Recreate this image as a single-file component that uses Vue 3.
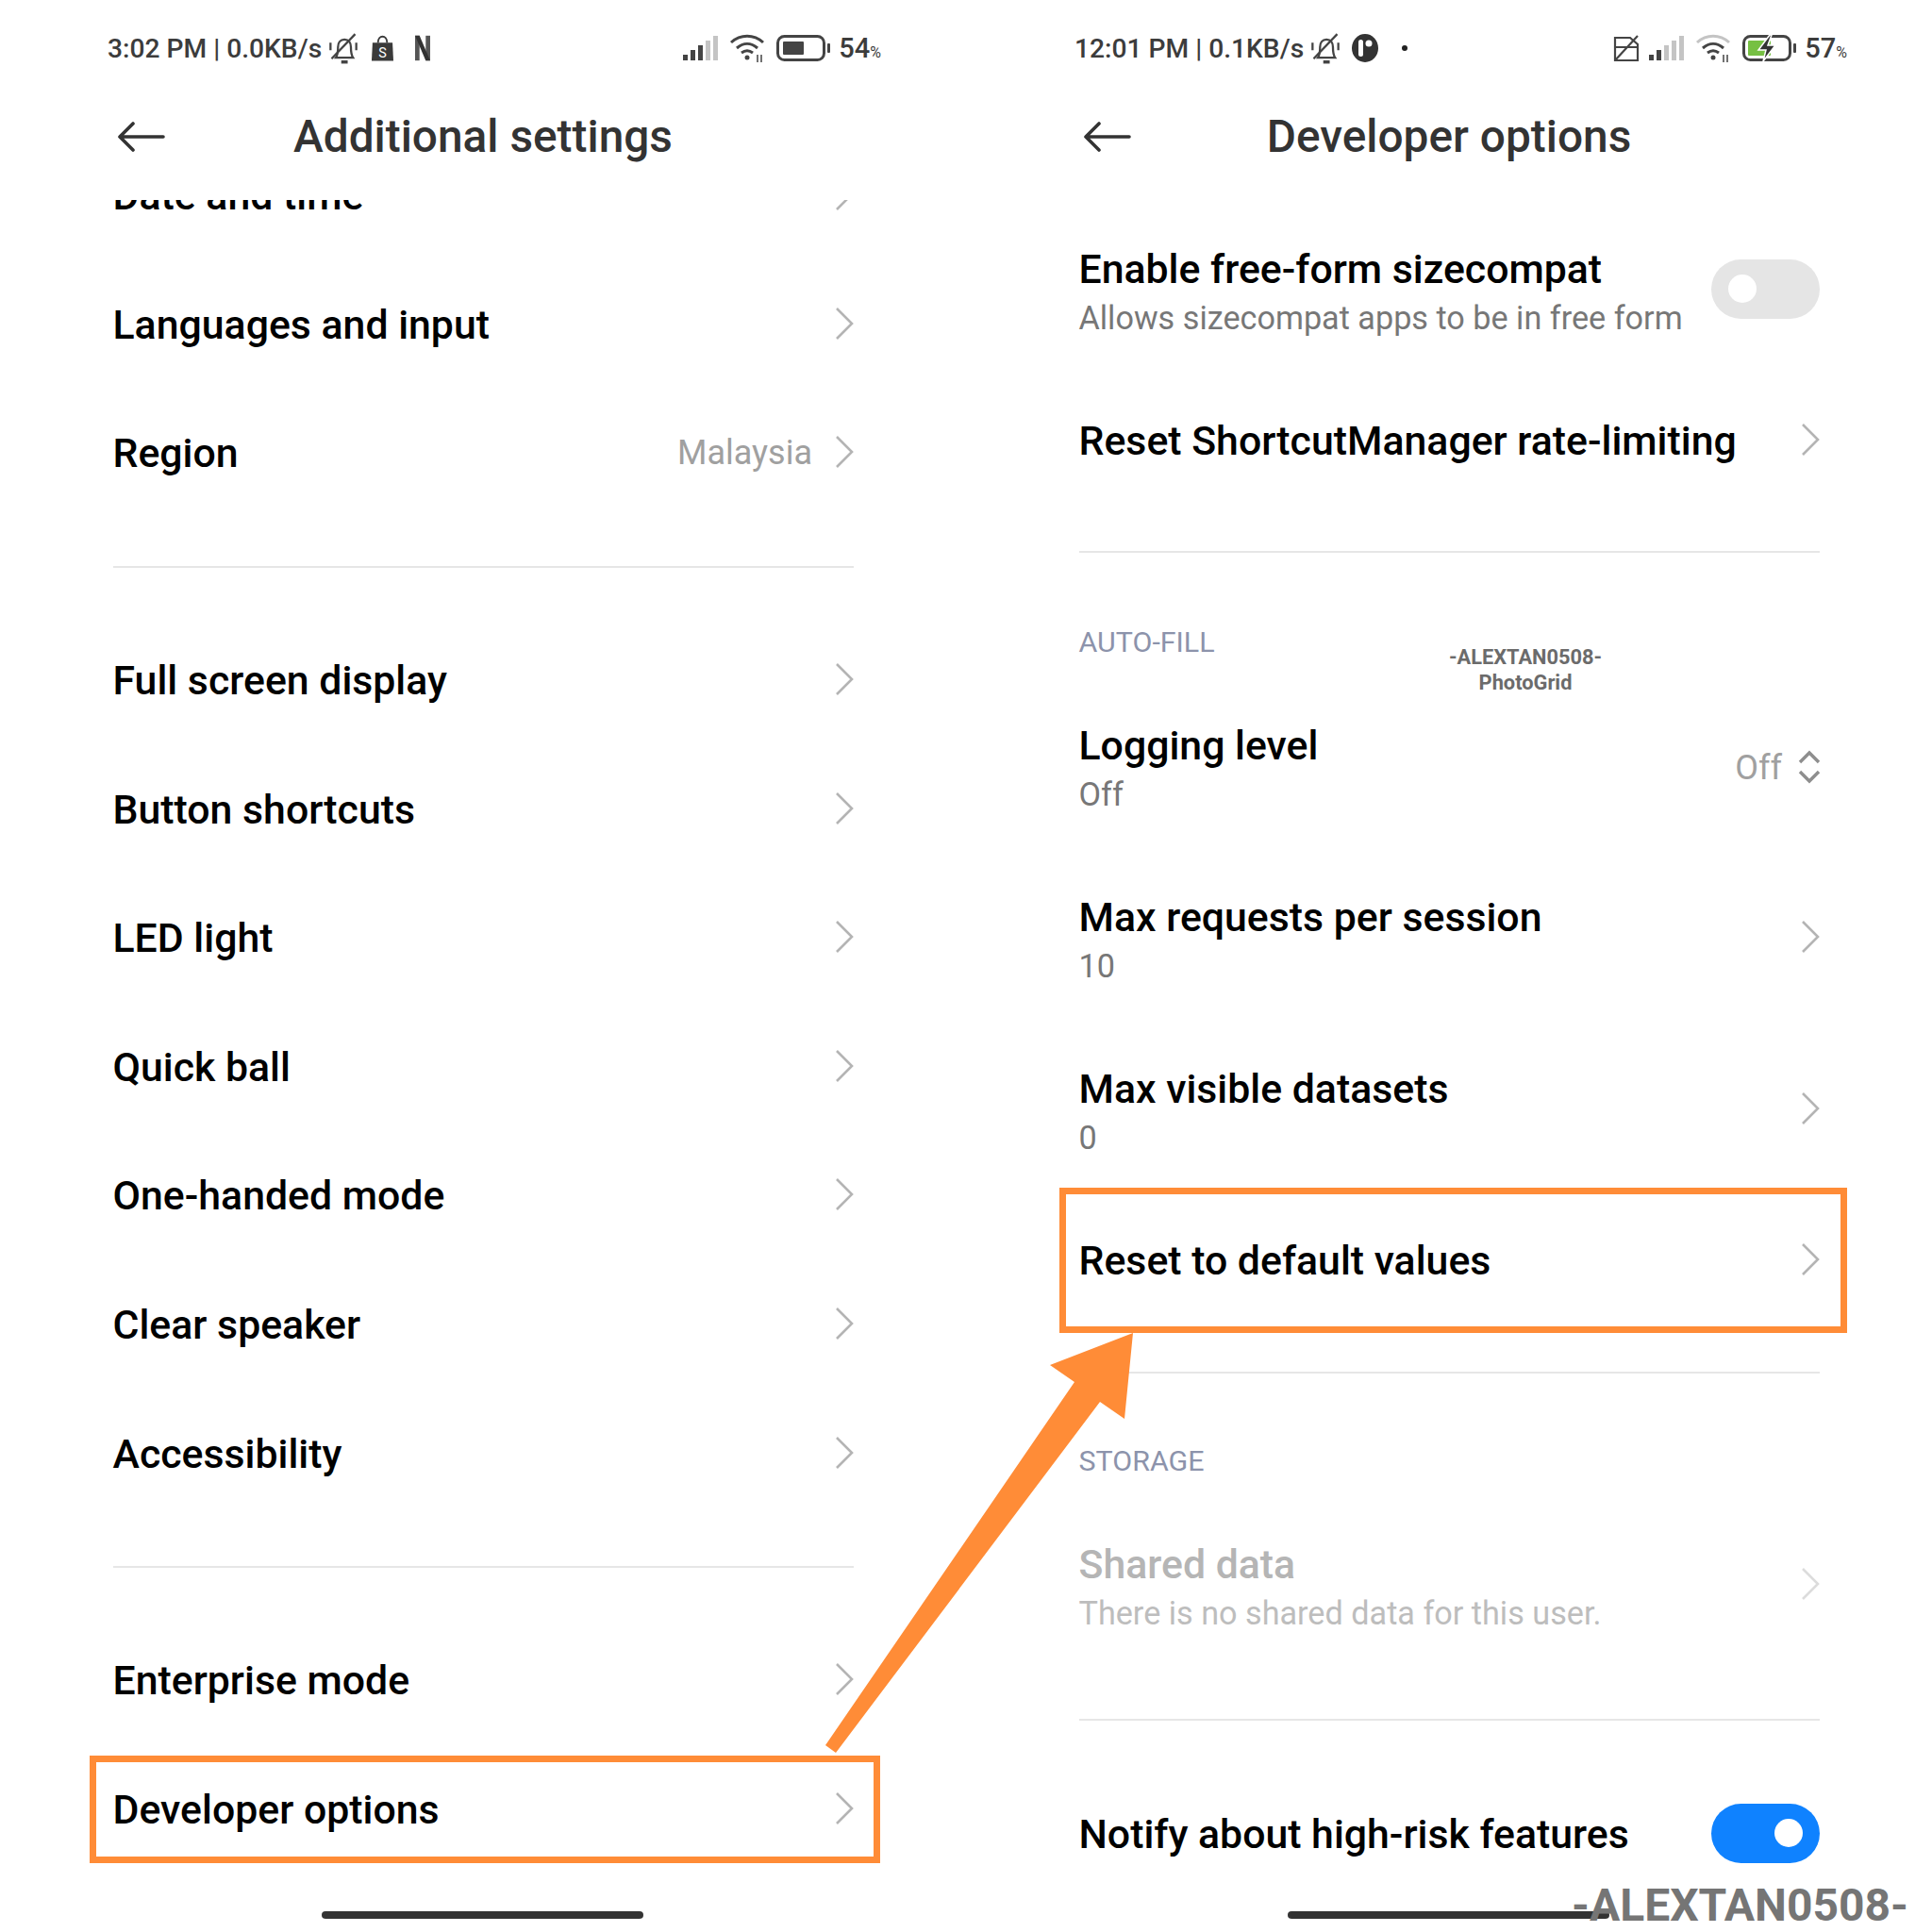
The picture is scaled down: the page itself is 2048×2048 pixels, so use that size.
<template>
  <div class="page">
    <!-- left phone -->
    <section class="panel">
      <div class="status">
        <span class="status-text">3:02 PM | 0.0KB/s</span>
        <svg class="ic-bell" width="30" height="33" viewBox="3 1 26 29" fill="none" stroke="#444" stroke-width="2">
          <path d="M9 24c2-3 2-6 2-10 0-4 2-7 6-7s6 3 6 7c0 4 0 7 2 10z" />
          <path d="M14 28h6" stroke-width="3" />
          <path d="M5 25L27 2" />
          <path d="M4 10v7M28 10v7" />
        </svg>
        <svg class="ic-bag" width="25" height="30" viewBox="0 0 26 30">
          <path d="M2 9h22l1 20H1z" fill="#3a3a3a" />
          <path d="M8 9c0-9 10-9 10 0" fill="none" stroke="#3a3a3a" stroke-width="2" />
          <text x="13" y="25" text-anchor="middle" font-size="15" fill="#fff" font-family="Roboto">S</text>
        </svg>
        <svg class="ic-n" width="16" height="28" viewBox="0 0 17 28">
          <rect x="0" y="0" width="5" height="28" fill="#555" />
          <rect x="12" y="0" width="5" height="28" fill="#555" />
          <polygon points="0,0 5,0 17,28 12,28" fill="#333" />
        </svg>
        <svg class="ic-signal" width="38" height="26" viewBox="0 0 38 26">
          <rect v-for="(b, i) in signalLeft" :key="i" :x="i * 8" :y="26 - b.h" width="5" :height="b.h" :fill="b.c" />
        </svg>
        <svg class="ic-wifi" width="38" height="30" viewBox="0 0 38 30" fill="none" stroke="#444" stroke-width="3">
          <path d="M2 9c10-9 24-9 34 0" />
          <path d="M8 15c7-6 15-6 22 0" />
          <path d="M13 20c4-3 8-3 12 0" />
          <circle cx="19" cy="25" r="2.5" fill="#444" stroke="none" />
          <path d="M30 22v8M34 22v8" stroke-width="1.5" />
        </svg>
        <svg class="ic-batt" width="58" height="28" viewBox="0 0 58 28">
          <rect x="1.5" y="1.5" width="49" height="25" rx="7" fill="none" stroke="#444" stroke-width="3" />
          <rect x="7" y="7" width="22" height="14" rx="1" fill="#444" />
          <rect x="54" y="9" width="3" height="10" rx="1" fill="#444" />
        </svg>
        <span class="status-pct">54<small>%</small></span>
      </div>

      <header class="header">
        <svg class="back" width="50" height="32" viewBox="0 0 50 32" fill="none" stroke="#333" stroke-width="3.6" stroke-linecap="round" stroke-linejoin="round">
          <path d="M48 16H3M16 2L2 16l14 14" />
        </svg>
        <h1>Additional settings</h1>
      </header>

      <div class="list list-left">
        <div class="scroller">
          <template v-for="(group, g) in leftGroups" :key="g">
            <div v-if="g > 0" class="divider big"></div>
            <div v-for="item in group" :key="item.title" class="row plain">
              <span class="title">{{ item.title }}</span>
              <span v-if="item.value" class="value">{{ item.value }}</span>
              <svg class="chev" width="20" height="36" viewBox="0 0 20 36" fill="none" stroke="#b4b4b4" stroke-width="2.6"><path d="M2 2l16 16L2 34" /></svg>
            </div>
          </template>
        </div>
      </div>
      <div class="home"></div>
    </section>

    <!-- right phone -->
    <section class="panel">
      <div class="status right-status">
        <span class="status-text">12:01 PM | 0.1KB/s</span>
        <svg class="ic-bell" width="30" height="33" viewBox="3 1 26 29" fill="none" stroke="#444" stroke-width="2">
          <path d="M9 24c2-3 2-6 2-10 0-4 2-7 6-7s6 3 6 7c0 4 0 7 2 10z" />
          <path d="M14 28h6" stroke-width="3" />
          <path d="M5 25L27 2" />
          <path d="M4 10v7M28 10v7" />
        </svg>
        <svg class="ic-circle" width="28" height="30" viewBox="0 0 28 30">
          <ellipse cx="14" cy="15" rx="14" ry="15" fill="#333" />
          <rect x="7" y="6" width="5" height="18" rx="2.5" fill="#fff" />
          <circle cx="18" cy="10" r="3.5" fill="#fff" />
        </svg>
        <span class="dot"></span>
        <svg class="ic-sim" width="28" height="30" viewBox="0 0 28 30" fill="none" stroke="#444" stroke-width="2.2">
          <path d="M2 28V4h16l8 7v17z" />
          <path d="M2 14h24M2 28L26 2" />
        </svg>
        <svg class="ic-signal2" width="38" height="26" viewBox="0 0 38 26">
          <rect v-for="(b, i) in signalRight" :key="i" :x="i * 8" :y="26 - b.h" width="5" :height="b.h" :fill="b.c" />
        </svg>
        <svg class="ic-wifi" width="38" height="30" viewBox="0 0 38 30" fill="none" stroke="#444" stroke-width="3">
          <path d="M2 9c10-9 24-9 34 0" stroke="#c4c4c4" />
          <path d="M8 15c7-6 15-6 22 0" />
          <path d="M13 20c4-3 8-3 12 0" />
          <circle cx="19" cy="25" r="2.5" fill="#444" stroke="none" />
          <path d="M30 22v8M34 22v8" stroke-width="1.5" />
        </svg>
        <svg class="ic-batt" width="58" height="28" viewBox="0 0 58 28">
          <rect x="1.5" y="1.5" width="49" height="25" rx="7" fill="none" stroke="#444" stroke-width="3" />
          <rect x="6" y="6" width="24" height="16" rx="1" fill="#76c043" />
          <path d="M29 0L17 16h8l-3 12 13-17h-8l4-11z" fill="#333" stroke="#fff" stroke-width="1.5" />
          <rect x="54" y="9" width="3" height="10" rx="1" fill="#444" />
        </svg>
        <span class="status-pct">57<small>%</small></span>
      </div>

      <header class="header">
        <svg class="back" width="50" height="32" viewBox="0 0 50 32" fill="none" stroke="#333" stroke-width="3.6" stroke-linecap="round" stroke-linejoin="round">
          <path d="M48 16H3M16 2L2 16l14 14" />
        </svg>
        <h1>Developer options</h1>
      </header>

      <div class="list list-right">
        <div class="row two">
          <div class="texts">
            <span class="title">Enable free-form sizecompat</span>
            <span class="sub">Allows sizecompat apps to be in free form</span>
          </div>
          <span class="toggle off"><i></i></span>
        </div>
        <div class="row single">
          <span class="title">Reset ShortcutManager rate-limiting</span>
          <svg class="chev" width="20" height="36" viewBox="0 0 20 36" fill="none" stroke="#b4b4b4" stroke-width="2.6"><path d="M2 2l16 16L2 34" /></svg>
        </div>
        <div class="divider d1"></div>

        <div class="section s1">AUTO-FILL</div>
        <div class="row two">
          <div class="texts">
            <span class="title">Logging level</span>
            <span class="sub">Off</span>
          </div>
          <span class="value off-value">Off</span>
          <svg class="updown" width="24" height="36" viewBox="0 0 24 36" fill="none" stroke="#8e8e8e" stroke-width="3.4"><path d="M2 13L12 3l10 10M2 23l10 10 10-10" /></svg>
        </div>
        <div v-for="item in autoFill" :key="item.title" class="row two">
          <div class="texts">
            <span class="title">{{ item.title }}</span>
            <span class="sub">{{ item.sub }}</span>
          </div>
          <svg class="chev" width="20" height="36" viewBox="0 0 20 36" fill="none" stroke="#b4b4b4" stroke-width="2.6"><path d="M2 2l16 16L2 34" /></svg>
        </div>
        <div class="row single">
          <span class="title">Reset to default values</span>
          <svg class="chev" width="20" height="36" viewBox="0 0 20 36" fill="none" stroke="#b4b4b4" stroke-width="2.6"><path d="M2 2l16 16L2 34" /></svg>
        </div>
        <div class="divider d2"></div>

        <div class="section s2">STORAGE</div>
        <div class="row two disabled">
          <div class="texts">
            <span class="title">Shared data</span>
            <span class="sub">There is no shared data for this user.</span>
          </div>
          <svg class="chev" width="20" height="36" viewBox="0 0 20 36" fill="none" stroke="#dcdcdc" stroke-width="2.6"><path d="M2 2l16 16L2 34" /></svg>
        </div>
        <div class="divider d3"></div>
        <div class="row single">
          <span class="title">Notify about high-risk features</span>
          <span class="toggle on"><i></i></span>
        </div>
      </div>
      <div class="home"></div>
    </section>

    <!-- annotations drawn over the screenshots -->
    <div class="mark mark-left"></div>
    <div class="mark mark-right"></div>
    <svg class="arrow" width="2048" height="2048" viewBox="0 0 2048 2048">
      <polygon points="875,1850 886,1858 1166,1486 1192,1504 1201,1413 1113,1447 1139,1465" fill="#ff8c37" />
    </svg>
    <div class="wm-small">-ALEXTAN0508-<br />PhotoGrid</div>
    <div class="wm-big">-ALEXTAN0508-</div>
  </div>
</template>

<script setup>
const leftGroups = [
  [{ title: "Date and time" }, { title: "Languages and input" }, { title: "Region", value: "Malaysia" }],
  [
    { title: "Full screen display" },
    { title: "Button shortcuts" },
    { title: "LED light" },
    { title: "Quick ball" },
    { title: "One-handed mode" },
    { title: "Clear speaker" },
    { title: "Accessibility" },
  ],
  [{ title: "Enterprise mode" }, { title: "Developer options" }],
];

const autoFill = [
  { title: "Max requests per session", sub: "10" },
  { title: "Max visible datasets", sub: "0" },
];

const signalLeft = [
  { h: 6, c: "#444" },
  { h: 11, c: "#444" },
  { h: 16, c: "#444" },
  { h: 21, c: "#c4c4c4" },
  { h: 26, c: "#c4c4c4" },
];

const signalRight = [
  { h: 6, c: "#444" },
  { h: 11, c: "#444" },
  { h: 16, c: "#c4c4c4" },
  { h: 21, c: "#c4c4c4" },
  { h: 26, c: "#c4c4c4" },
];
</script>

<style scoped>
.page {
  position: relative;
  display: flex;
  width: 2048px;
  height: 2048px;
  overflow: hidden;
  background: #fff;
  font-family: Roboto, "Noto Sans", sans-serif;
  color: #000;
}

.panel {
  position: relative;
  display: flex;
  flex-direction: column;
  width: 1024px;
  height: 2048px;
}

/* status bar */
.status {
  display: flex;
  align-items: center;
  height: 102px;
  padding: 0 90px 0 114px;
  box-sizing: border-box;
  color: #3c3c3c;
}

.right-status {
  padding-left: 115px;
}

.status-text {
  font-size: 28.2px;
  font-weight: 500;
  white-space: nowrap;
}

.status-pct {
  margin-left: 8px;
  font-size: 29px;
  font-weight: 500;
}

.status-pct small {
  font-size: 16px;
  font-weight: 400;
}

.ic-bell {
  margin-left: 8px;
}

.ic-bag {
  margin-left: 14px;
}

.ic-n {
  margin-left: 22px;
}

.ic-signal {
  margin-left: auto;
}

.ic-circle {
  margin-left: 13px;
}

.dot {
  width: 6px;
  height: 6px;
  margin-left: 25px;
  border-radius: 50%;
  background: #222;
}

.ic-sim {
  margin-left: auto;
}

.ic-signal2 {
  margin-left: 10px;
}

.ic-wifi {
  margin-left: 11px;
}

.ic-batt {
  margin-left: 12px;
}

/* title bar */
.header {
  position: relative;
  display: flex;
  align-items: center;
  justify-content: center;
  height: 86px;
  margin-bottom: 24px;
}

.header h1 {
  margin: -1px 0 0;
  font-size: 47.8px;
  font-weight: 500;
  color: #333;
}

.back {
  position: absolute;
  left: 125px;
  top: 27px;
}

/* lists */
.list {
  flex: 1;
  min-height: 0;
  padding: 0 119px 0 119.5px;
  overflow: hidden;
}

.list-right {
  padding-top: 8px;
}

.scroller {
  margin-top: -73px;
}

.row {
  display: flex;
  align-items: center;
}

.plain {
  height: 136.6px;
}

.two {
  height: 182px;
}

.single {
  height: 130px;
}

.texts {
  display: flex;
  flex-direction: column;
  margin-right: auto;
}

.title {
  font-size: 42.8px;
  font-weight: 500;
  line-height: 52px;
  margin-right: auto;
  white-space: nowrap;
}

.sub {
  font-size: 34.2px;
  line-height: 52px;
  color: #777;
  white-space: nowrap;
}

.value {
  margin-right: 24px;
  font-size: 36px;
  color: #a0a0a0;
}

.off-value {
  margin-right: 17px;
}

.chev {
  flex: none;
}

.plain .chev {
  margin-bottom: 2px;
}

.two .chev {
  margin-bottom: 11px;
}

.single .chev {
  margin-bottom: 3px;
}

.updown {
  flex: none;
  margin-right: -1px;
  margin-bottom: 7px;
}

.two .value {
  margin-bottom: 5px;
}

.two .toggle {
  margin-bottom: 10px;
}

.disabled .title {
  color: #b5b5b5;
}

.disabled .sub {
  color: #bdbdbd;
}

.divider {
  height: 2px;
  background: #e6e6e6;
}

.big {
  margin: 51px 0 51px;
}

.d1 {
  margin-top: 52px;
}

.d2 {
  margin-top: 53px;
}

.d3 {
  margin: 47px 0 55px;
}

.section {
  box-sizing: border-box;
  font-size: 30.4px;
  line-height: 36px;
  color: #8c93ab;
}

.s1 {
  height: 139px;
  padding-top: 77px;
}

.s2 {
  height: 137px;
  padding-top: 75px;
}

/* switches */
.toggle {
  display: flex;
  align-items: center;
  flex: none;
  width: 115px;
  height: 63px;
  padding: 0 18px;
  box-sizing: border-box;
  border-radius: 32px;
}

.toggle i {
  width: 30px;
  height: 30px;
  border-radius: 50%;
  background: #fff;
}

.off {
  background: #e5e5e5;
}

.on {
  justify-content: flex-end;
  margin-bottom: 2px;
  background: #0f82ff;
}

.home {
  position: absolute;
  left: 341px;
  bottom: 14px;
  width: 341px;
  height: 8px;
  border-radius: 4px;
  background: #333;
}

/* annotations */
.mark {
  position: absolute;
  border: 7px solid #ff8c37;
  box-sizing: border-box;
}

.mark-left {
  left: 95px;
  top: 1861px;
  width: 838px;
  height: 114px;
}

.mark-right {
  left: 1123px;
  top: 1259px;
  width: 835px;
  height: 154px;
}

.arrow {
  position: absolute;
  left: 0;
  top: 0;
  pointer-events: none;
}

.wm-small {
  position: absolute;
  left: 1467px;
  top: 683px;
  width: 300px;
  font-size: 21.8px;
  font-weight: 700;
  line-height: 27px;
  text-align: center;
  color: #6b6b6b;
}

.wm-big {
  position: absolute;
  left: 1666px;
  top: 1990px;
  font-size: 48px;
  font-weight: 700;
  line-height: 60px;
  color: #757575;
  white-space: nowrap;
}
</style>

<style>
html,
body {
  margin: 0;
  background: #fff;
}
</style>
